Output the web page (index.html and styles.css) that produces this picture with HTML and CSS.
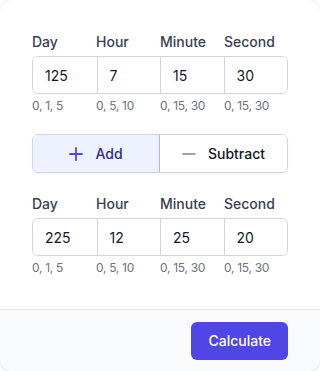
FILE: index.html
```html
<!DOCTYPE html>
<html>
<head>
    <title>Time calculator</title>
    <link rel="stylesheet" href="styles.css">
</head>
<body>
    <div class="card">
        <div class="card-body">
            <div class="time-group">
                <div class="labels">
                    <span>Day</span><span>Hour</span><span>Minute</span><span>Second</span>
                </div>
                <div class="inputs">
                    <input type="text" value="125">
                    <input type="text" value="7">
                    <input type="text" value="15">
                    <input type="text" value="30">
                </div>
                <div class="hints">
                    <span>0, 1, 5</span><span>0, 5, 10</span><span>0, 15, 30</span><span>0, 15, 30</span>
                </div>
            </div>

            <div class="op-toggle">
                <button class="op-btn active">
                    <svg width="14" height="14" viewBox="0 0 14 14"><path d="M7 1v12M1 7h12" stroke="currentColor" stroke-width="1.8" stroke-linecap="round"/></svg>
                    Add
                </button>
                <button class="op-btn">
                    <svg width="14" height="14" viewBox="0 0 14 14"><path d="M1 7h12" stroke="currentColor" stroke-width="1.8" stroke-linecap="round"/></svg>
                    Subtract
                </button>
            </div>

            <div class="time-group">
                <div class="labels">
                    <span>Day</span><span>Hour</span><span>Minute</span><span>Second</span>
                </div>
                <div class="inputs">
                    <input type="text" value="225">
                    <input type="text" value="12">
                    <input type="text" value="25">
                    <input type="text" value="20">
                </div>
                <div class="hints">
                    <span>0, 1, 5</span><span>0, 5, 10</span><span>0, 15, 30</span><span>0, 15, 30</span>
                </div>
            </div>
        </div>
        <div class="card-footer">
            <button class="calc-btn">Calculate</button>
        </div>
    </div>
</body>
</html>
```

FILE: styles.css
```css
body { margin:0; background:#fff; font-family: Inter, "Noto Sans", sans-serif; }
.card {
    width:320px; height:371px;
    box-sizing:border-box;
    border-radius:12px;
    overflow:hidden;
    box-shadow: 0 0 0 1px rgba(17,24,39,.05), 0 1px 3px rgba(0,0,0,.08);
    display:flex;
    flex-direction:column;
}
.card-body { padding:32px 32px 0; flex:1; }

.labels, .inputs, .hints {
    display:grid;
    grid-template-columns: repeat(4, 1fr);
}
.labels span {
    font-size:14px; line-height:20px;
    color:#374151; font-weight:500;
}
.inputs {
    margin-top:4px;
    border:1px solid #d1d5db;
    border-radius:6px;
    overflow:hidden;
}
.inputs input {
    min-width:0;
    height:36px;
    box-sizing:border-box;
    border:0;
    border-left:1px solid #d1d5db;
    padding:0 12px;
    font:14px Inter, sans-serif;
    color:#111827;
    outline:none;
}
.inputs input:first-child { border-left:0; }
.hints { margin-top:4px; }
.hints span { font-size:12px; line-height:16px; color:#6b7280; letter-spacing:-0.3px; }

.op-toggle {
    display:grid;
    grid-template-columns: 1fr 1fr;
    margin:20px 0 21px;
    height:39px;
    box-sizing:border-box;
    border:1px solid #d1d5db;
    border-radius:6px;
    overflow:hidden;
    box-shadow:0 1px 2px rgba(0,0,0,.05);
}
.op-btn {
    display:flex; align-items:center; justify-content:center; gap:12px;
    border:0; background:#fff;
    font:500 14px Inter, sans-serif;
    color:#111827;
    cursor:pointer;
}
.op-btn svg { color:#9ca3af; }
.op-btn.active {
    background:#eef2ff;
    color:#312e81;
    border-right:1px solid #a5b4fc;
}
.op-btn.active svg { color:#4f46e5; }

.card-footer {
    height:62px;
    box-sizing:border-box;
    border-top:1px solid #e5e7eb;
    background:#f9fafb;
    display:flex; justify-content:flex-end; align-items:center;
    padding:0 32px;
}
.calc-btn {
    height:38px;
    padding:0 17px;
    border:0; border-radius:6px;
    background:#4f46e5; color:#fff;
    font:500 14px Inter, sans-serif;
    cursor:pointer;
}
```
